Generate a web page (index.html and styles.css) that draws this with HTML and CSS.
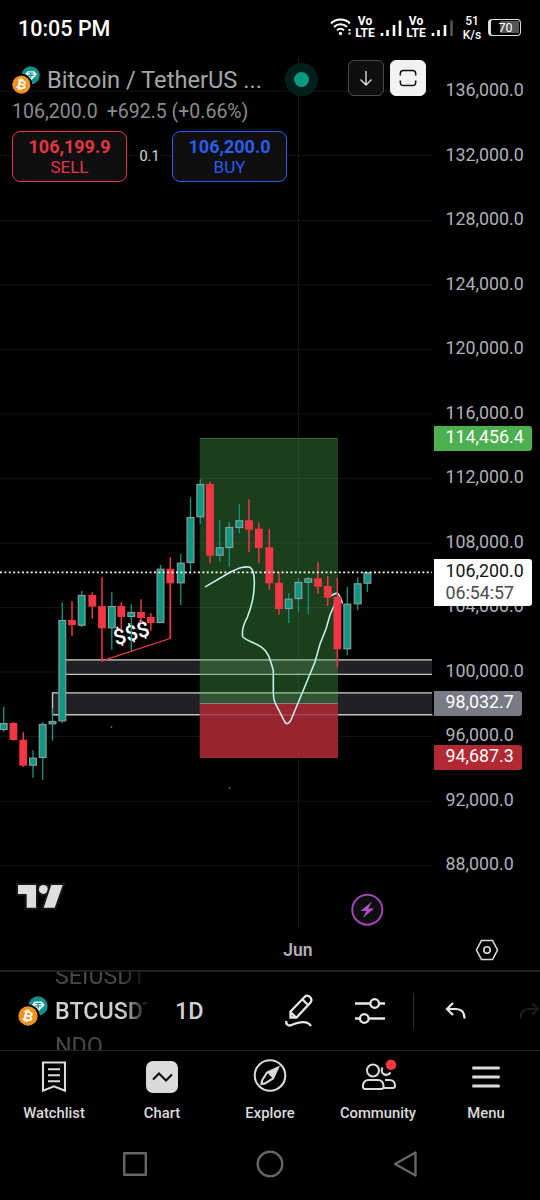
FILE: index.html
```html
<!DOCTYPE html>
<html lang="en">
<head>
    <meta charset="UTF-8">
    <meta name="viewport" content="width=device-width, initial-scale=1.0">
    <title>BTCUSDT Chart</title>
    <link rel="stylesheet" href="styles.css">
</head>
<body>
    <svg class="defs" width="0" height="0">
        <symbol id="coins" viewBox="0 0 30 30">
            <circle cx="20" cy="10" r="9.7" fill="#12918a"/>
            <path d="M16.500 5.500h7.500l2.800 3.500-6 6-7-6z" fill="#e9f6f4"/>
            <path d="M17.500 7.500h5.500M20.200 7.500v5M17 10h6.500" stroke="#12918a" stroke-width="1.200" fill="none"/>
            <circle cx="10" cy="20" r="11.600" fill="#000"/>
            <circle cx="10" cy="20" r="9.700" fill="#f0921f"/>
            <text x="10" y="24.500" class="coin-sign" transform="rotate(13 10 20)">₿</text>
        </symbol>
    </svg>

    <div class="status-bar">
        <span class="clock">10:05 PM</span>
        <div class="status-icons">
            <svg class="wifi" width="23" height="20" viewBox="0 0 23 20">
                <path d="M1 6.500a13.500 13.500 0 0 1 19 0M4 10a9.300 9.300 0 0 1 13 0M7 13.300a5 5 0 0 1 7 0"/>
                <circle cx="10.500" cy="16.500" r="1.700"/>
                <path class="thin" d="M19.500 12v2M19.500 15.500v2"/>
            </svg>
            <span class="volte">Vo<br>LTE</span>
            <svg class="signal" width="22" height="18" viewBox="0 0 22 18">
                <path d="M2 14v3M7.500 11v6M14 6v11M20 1.500v15.500"/>
            </svg>
            <span class="volte">Vo<br>LTE</span>
            <svg class="signal" width="22" height="18" viewBox="0 0 22 18">
                <path d="M2 14v3M7.500 11v6M14 6v11"/>
                <path class="off" d="M20.500 1.500v15.500"/>
            </svg>
            <span class="speed">51<br>K/s</span>
            <span class="battery"><span class="level">70</span></span>
        </div>
    </div>

    <div class="chart">
        <svg class="plot" id="plot" width="433" height="873" viewBox="0 56 433 873">
            <g id="grid"></g>
            <path class="grid-line" d="M298.500 56v873"/>
            <g class="zones">
                <rect x="62" y="660" width="370" height="14"/>
                <rect x="52" y="693" width="380" height="22"/>
                <path class="zone-top" d="M62 659.900h370M52 692.900h380"/>
                <path class="zone-bottom" d="M62 674.400h370M52.500 692.500v22.300h380"/>
            </g>
            <rect class="profit" x="199.700" y="438" width="138.300" height="265.500"/>
            <rect class="loss" x="199.700" y="703.500" width="138.300" height="54.500"/>
            <path class="entry" d="M199.700 703.500h138.300"/>
            <path class="target" d="M199.700 438.500h138.300"/>
            <path class="loss-line" d="M199.700 714.800h138.300"/>
            <g class="brush" transform="translate(190 420) scale(.3333)">
                <path d="M47 500L115 460C150 441 165 438 180 442C190 447 193 460 193 490C193 530 180 572 172 592C160 613 155 630 158 650C165 660 185 664 205 676C235 692 240 715 250 752V820Q250 838 256 850L282 901Q291 922 303 900L375 726L390 672L408 627L420 585L440 540"/>
                <path d="M424 527C437 520 440 518 445 522C450 530 454 538 457 549"/>
            </g>
            <text class="liquidity" x="131.300" y="640.500" transform="rotate(-17 131.3 633)">$$$</text>
            <g id="candles"></g>
            <path class="trend" d="M102 660.800L170.500 638.300V580"/>
            <path class="last-price" d="M0 572.300h432"/>
            <circle class="speck" cx="111.500" cy="727" r=".8"/>
            <circle class="speck" cx="229.500" cy="788" r=".8"/>
            <g class="tv-logo">
                <path d="M18 885H36V907.700H26.700V894H18Z"/>
                <circle cx="43.400" cy="889.400" r="4.500"/>
                <path d="M51.300 885H62.700L54.700 907.700H43.700Z"/>
            </g>
            <g class="flash">
                <circle cx="367.300" cy="909.700" r="15"/>
                <path d="M372 901.500L360.500 911H366.500L362.800 918L374.200 908.500H368.300Z"/>
            </g>
        </svg>

        <div class="price-axis">
            <span>136,000.0</span>
            <span>132,000.0</span>
            <span>128,000.0</span>
            <span>124,000.0</span>
            <span>120,000.0</span>
            <span>116,000.0</span>
            <span>112,000.0</span>
            <span>108,000.0</span>
            <span>104,000.0</span>
            <span>100,000.0</span>
            <span>96,000.0</span>
            <span>92,000.0</span>
            <span>88,000.0</span>
            <div class="tag tag-target">114,456.4</div>
            <div class="tag tag-last">106,200.0<br><small>06:54:57</small></div>
            <div class="tag tag-entry">98,032.7</div>
            <div class="tag tag-stop">94,687.3</div>
        </div>

        <div class="legend">
            <div class="title-row">
                <svg class="coins" width="28" height="28"><use href="#coins"/></svg>
                <span class="name">Bitcoin / TetherUS ...</span>
                <span class="market-dot"></span>
                <button class="icon-btn">
                    <svg width="20" height="20" viewBox="0 0 20 20"><path d="M10 3v14M4.500 11.500L10 17l5.500-5.500"/></svg>
                </button>
                <button class="icon-btn light">
                    <svg width="20" height="20" viewBox="0 0 20 20"><path d="M2.300 7.500V5.800Q2.300 2.500 5.600 2.500h8.800Q17.700 2.500 17.700 5.800V7.500M2.300 12.500v1.700Q2.300 17.500 5.600 17.500h8.800Q17.700 17.500 17.700 14.200V12.500"/></svg>
                </button>
            </div>
            <div class="quote"><span>106,200.0</span><span>+692.5 (+0.66%)</span></div>
            <div class="trade">
                <button class="order sell"><b>106,199.9</b>SELL</button>
                <span class="spread">0.1</span>
                <button class="order buy"><b>106,200.0</b>BUY</button>
            </div>
        </div>
    </div>

    <div class="time-axis">
        <span class="month">Jun</span>
        <svg class="settings" width="24" height="22" viewBox="0 0 24 22">
            <path d="M6.500 1.500h11L22.500 11l-5 9.500h-11L1.500 11z"/>
            <circle cx="12" cy="11" r="3.200"/>
        </svg>
    </div>

    <div class="toolbar">
        <svg class="coins" width="30" height="30"><use href="#coins"/></svg>
        <div class="symbols">
            <span>SEIUSDT</span>
            <span class="current">BTCUSDT</span>
            <span>NDQ</span>
        </div>
        <span class="interval">1D</span>
        <svg class="draw" width="32" height="36" viewBox="0 0 32 36">
            <path d="M6.500 18.500L21 3.500Q23.500 1.500 26 4t.500 5.500L12.500 24.500H6.500zM18.500 6.500l5.500 5.500M6.500 19l5.500 5.500"/>
            <path d="M2.500 28c-1 3 1.500 5.500 5 4 6-2.500 15-5.500 19.500 1"/>
        </svg>
        <svg class="sliders" width="32" height="28" viewBox="0 0 32 28">
            <path d="M1 6.500h15M25 6.500h6M1 21.500h5M15 21.500h16"/>
            <circle cx="20.700" cy="6.500" r="4.300"/>
            <circle cx="10.300" cy="21.500" r="4.300"/>
        </svg>
        <span class="divider"></span>
        <svg class="undo" width="22" height="18" viewBox="0 0 22 18">
            <path d="M8 1L2 7l6 6M2 7h9q8.500 0 8.500 9.500"/>
        </svg>
        <svg class="redo" width="22" height="18" viewBox="0 0 22 18">
            <path d="M14 1l6 6-6 6M20 7h-9Q2.500 7 2.500 16.500"/>
        </svg>
    </div>

    <div class="tabs">
        <div class="tab">
            <svg width="34" height="34" viewBox="0 0 34 34"><path d="M6 2.500h22v28.300l-11-4.500-11 4.500zM11 9.300h12M11 15.300h12M11 21.300h12"/></svg>
            <span>Watchlist</span>
        </div>
        <div class="tab">
            <svg width="34" height="34" viewBox="0 0 34 34"><rect class="solid" x="1" y="1" width="32" height="32" rx="7"/><path class="dark" d="M8 19.500l6-6 7 7 6-6"/></svg>
            <span>Chart</span>
        </div>
        <div class="tab">
            <svg width="34" height="34" viewBox="0 0 34 34"><circle cx="17" cy="15.500" r="15.300"/><path d="M25 7.500l-5 11-8 5-3.500.500.500-3.500 5-8z"/><path class="solid" d="M25 7.500l-11 5 6 6z"/></svg>
            <span>Explore</span>
        </div>
        <div class="tab">
            <svg width="38" height="34" viewBox="0 0 38 34">
                <circle cx="14" cy="10.500" r="6"/>
                <path d="M4 27.500q-.500-7.500 6-7.500h8.500q6.500 0 6 7.500-.500 1.500-2 1.500H6q-1.500 0-2-1.500zM23.500 7.500q-2 4 1 6.500 4 2.500 7-1.500M26 20h4q6.500 0 6 6.500-.500 1.500-2 1.500h-9"/>
                <circle class="badge" cx="32" cy="4.800" r="5.300"/>
            </svg>
            <span>Community</span>
        </div>
        <div class="tab">
            <svg width="34" height="34" viewBox="0 0 34 34"><path class="bars" d="M3.300 8h27.400M3.300 17h27.400M3.300 26h27.400"/></svg>
            <span>Menu</span>
        </div>
    </div>

    <div class="nav">
        <svg width="28" height="28" viewBox="0 0 28 28"><path d="M3.200 3.200h21.600v21.600H3.200z"/></svg>
        <svg width="28" height="28" viewBox="0 0 28 28"><circle cx="14" cy="14" r="12.300"/></svg>
        <svg width="28" height="28" viewBox="0 0 28 28"><path d="M24.500 2.500v23L4 14z"/></svg>
    </div>

    <script src="chart.js"></script>
</body>
</html>
```

FILE: styles.css
```css
* {
    box-sizing: border-box;
}

body {
    margin: 0;
    width: 540px;
    height: 1200px;
    overflow: hidden;
    background: #000;
    color: #dbdbdb;
    font-family: Roboto, "Liberation Sans", sans-serif;
}

svg {
    fill: none;
    display: block;
    flex: none;
}

.defs {
    position: absolute;
}

button {
    font-family: inherit;
    padding: 0;
}

/* Status bar */
.status-bar {
    height: 56px;
    padding: 0 19px 0 18px;
    display: flex;
    align-items: center;
    justify-content: space-between;
}

.clock {
    font-size: 21.5px;
    font-weight: 500;
    color: #fff;
}

.status-icons {
    display: flex;
    align-items: center;
    color: #fff;
}

.wifi {
    stroke: #fff;
    stroke-width: 2;
    margin: -2px 2px 0 0;
}

.wifi circle {
    fill: #fff;
    stroke: none;
}

.volte {
    width: 20px;
    margin-top: -3px;
    font-size: 12px;
    line-height: 12px;
    font-weight: 700;
    text-align: center;
}

.signal {
    stroke: #fff;
    stroke-width: 2.6;
    margin: 0 4px 0 5px;
}

.signal .off {
    stroke: #555;
}

.speed {
    width: 20px;
    margin: 0 6px 0 5px;
    font-size: 12px;
    line-height: 14px;
    font-weight: 500;
    text-align: center;
}

.battery {
    width: 33px;
    height: 17px;
    margin-top: -2px;
    padding: 1px;
    border: 1.5px solid #ddd;
    border-left-width: 3px;
    border-radius: 4px;
}

.level {
    display: block;
    height: 12px;
    line-height: 13px;
    font-size: 12.5px;
    text-align: center;
    background: linear-gradient(90deg, #000 30%, #555 30%);
}

/* Chart */
.chart {
    position: relative;
    display: flex;
    height: 873px;
}

.grid-line {
    stroke: #151515;
}

.zones rect {
    fill: #212125;
}

.zone-top {
    stroke: #9d9d9f;
    stroke-width: 1.8;
}

.zone-bottom {
    stroke: #c4c4c4;
    stroke-width: 1.4;
}

.profit {
    fill: #4caf50;
    fill-opacity: .36;
}

.loss {
    fill: #a02632;
    fill-opacity: .94;
}

.entry {
    stroke: #80837e;
}

.target {
    stroke: #2f6330;
}

.loss-line {
    stroke: #b34a55;
}

.brush {
    stroke: #c3f0e9;
    stroke-width: 4.8;
    stroke-linecap: round;
}

.liquidity {
    fill: #fff;
    font-size: 21.5px;
    font-weight: 500;
    text-anchor: middle;
}

.up {
    fill: #0b9981;
    stroke: #8f9a9b;
    stroke-width: 1.2;
}

.down {
    fill: #f23645;
}

.wick-up {
    stroke: #0b9981;
    stroke-width: 1.3;
}

.wick-down {
    stroke: #f23645;
    stroke-width: 1.5;
}

.trend {
    stroke: #e13a4a;
    stroke-width: 1.4;
}

.last-price {
    stroke: #fff;
    stroke-width: 1.7;
    stroke-dasharray: 1.9 2.5;
}

.speck {
    fill: #999;
}

.tv-logo {
    fill: #dedede;
    stroke: #171717;
    stroke-width: 4;
    paint-order: stroke;
}

.flash circle {
    fill: #0d0d0d;
    stroke: #a245b4;
    stroke-width: 2;
}

.flash path {
    fill: #b04fc2;
}

.coin-sign {
    fill: #fff;
    font-size: 13.5px;
    font-weight: 700;
    text-anchor: middle;
}

.price-axis {
    position: relative;
    flex: 1;
    padding: 2px 0 0 12.5px;
    display: flex;
    flex-direction: column;
    color: #b0b1b6;
    font-size: 17.8px;
}

.price-axis > span {
    height: 64.54px;
    line-height: 64.54px;
}

.tag {
    position: absolute;
    left: .5px;
    height: 25px;
    padding: 0 8px 0 12px;
    line-height: 22px;
    border-radius: 0 3px 3px 0;
    color: #fff;
}

.tag-target {
    top: 370px;
    background: #4caf50;
}

.tag-last {
    top: 503px;
    height: 47px;
    line-height: 22px;
    padding-top: 1px;
    background: #fff;
    color: #131313;
}

.tag-last small {
    font-size: inherit;
    color: #4a4a4a;
}

.tag-entry {
    top: 635px;
    background: #787b86;
}

.tag-stop {
    top: 689px;
    background: #b22833;
}

/* Symbol info over the chart */
.legend {
    position: absolute;
    left: 12px;
    top: 4px;
    width: 414px;
}

.title-row {
    display: flex;
    align-items: center;
    height: 36px;
}

.title-row .coins {
    margin-top: 3px;
}

.name {
    width: 226px;
    margin: 3px 0 0 7px;
    font-size: 23.7px;
    color: #a6a6a6;
    white-space: nowrap;
}

.market-dot {
    width: 33px;
    height: 33px;
    margin: 3px 30px 0 12px;
    border: 9px solid #02201b;
    border-radius: 50%;
    background: #089981;
}

.icon-btn {
    width: 36px;
    height: 36px;
    flex: none;
    display: flex;
    align-items: center;
    justify-content: center;
    background: #0f0f0f;
    border: 1px solid #4a4a4a;
    border-radius: 6px;
    stroke: #dbdbdb;
    stroke-width: 1.4;
}

.icon-btn.light {
    margin-left: 6px;
    background: #f2f2f2;
    border-color: #f2f2f2;
    stroke: #111;
    stroke-width: 1.5;
}

.quote {
    display: flex;
    gap: 9px;
    height: 35px;
    line-height: 31px;
    font-size: 19.5px;
    color: #8c8c8c;
}

.trade {
    display: flex;
    align-items: center;
}

.order {
    width: 115px;
    height: 51px;
    border: 1.5px solid;
    border-radius: 8px;
    background: #0f0f0f;
    font-size: 17px;
    line-height: 20px;
}

.order b {
    display: block;
    font-size: 18px;
}

.sell {
    color: #e23644;
}

.buy {
    color: #2a5cee;
}

.spread {
    width: 45px;
    font-size: 14.5px;
    text-align: center;
}

/* Time axis */
.time-axis {
    height: 43px;
    display: flex;
    align-items: center;
    border-bottom: 2px solid #202020;
}

.month {
    width: 298px;
    margin-left: 149px;
    font-size: 17.5px;
    font-weight: 600;
    text-align: center;
    color: #b0b1b6;
}

.settings {
    margin-left: 28px;
    stroke: #dbdbdb;
    stroke-width: 1.6;
}

/* Toolbar */
.toolbar {
    height: 79px;
    padding-left: 18px;
    display: flex;
    align-items: center;
    overflow: hidden;
    border-bottom: 1px solid #262626;
    stroke: #e8e8e8;
    stroke-width: 2;
}

.coins {
    stroke: none;
}

.symbols {
    width: 96px;
    margin-left: 7px;
    display: flex;
    flex-direction: column;
    overflow: hidden;
    font-size: 23.3px;
    line-height: 35px;
    color: #484848;
    -webkit-mask-image: linear-gradient(90deg, #000 70%, transparent 98%);
    mask-image: linear-gradient(90deg, #000 70%, transparent 98%);
}

.symbols .current {
    font-weight: 500;
    color: #cfcfcf;
}

.interval {
    width: 60px;
    margin-left: 24px;
    font-size: 23.5px;
    font-weight: 500;
    color: #cfcfcf;
}

.draw {
    margin-left: 49px;
    stroke-width: 2.3;
}

.sliders {
    margin-left: 38px;
    stroke-width: 2.3;
}

.divider {
    width: 1px;
    height: 36px;
    margin: 0 31px 0 27px;
    background: #2c2c2c;
}

.undo {
    stroke-width: 2.2;
}

.redo {
    margin-left: 51px;
    stroke: #1c1c1c;
}

/* Tabs */
.tabs {
    height: 77px;
    padding-top: 9px;
    display: flex;
    stroke: #dbdbdb;
    stroke-width: 2.1;
}

.tab {
    width: 108px;
    display: flex;
    flex-direction: column;
    align-items: center;
    gap: 10px;
    font-size: 14.8px;
    font-weight: 500;
}

.tab svg {
    overflow: visible;
}

.solid {
    fill: #dbdbdb;
    stroke: none;
}

.dark {
    stroke: #0f0f0f;
}

.bars {
    stroke-width: 2.8;
}

.badge {
    fill: #f23645;
    stroke: none;
}

/* Android navigation */
.nav {
    height: 72px;
    padding: 0 121px;
    display: flex;
    align-items: center;
    justify-content: space-between;
    stroke: #666;
    stroke-width: 2.4;
    stroke-linejoin: round;
}
```

FILE: chart.js
```javascript
const svgNs = "http://www.w3.org/2000/svg";
const grid = document.getElementById("grid");
const candleLayer = document.getElementById("candles");

// x, body top, body bottom, high, low, direction
const candles = [
    [3.7, 723, 730, 706.7, 731.7, "up"],
    [13.4, 723, 740, 722, 740.7, "down"],
    [23.2, 739.7, 765.7, 732.3, 767, "down"],
    [33, 757.7, 765.7, 750.3, 777.7, "up"],
    [42.7, 724, 758, 722, 780, "up"],
    [52.5, 721, 724.3, 708.3, 740.7, "up"],
    [62.3, 620, 721.3, 602.3, 723, "up"],
    [72, 620, 625.3, 601.3, 636, "down"],
    [81.7, 595, 625.7, 591, 627, "up"],
    [92.3, 595, 606.7, 592.3, 618.7, "down"],
    [102, 606, 628.3, 577.3, 661.7, "down"],
    [111.8, 606, 628.3, 592.3, 649.7, "up"],
    [121.3, 606, 617, 602.3, 630, "down"],
    [131.3, 612, 617, 604.3, 651.7, "up"],
    [141, 612, 618, 599.3, 623.3, "down"],
    [150.8, 617, 623, 613, 630.7, "down"],
    [160.5, 568.7, 623, 565, 623, "up"],
    [170.3, 568.7, 583.3, 557.3, 638.3, "down"],
    [180.8, 562.7, 583.3, 554, 605, "up"],
    [190.5, 517, 563, 497.3, 574.3, "up"],
    [200.3, 484, 517.3, 479.3, 524, "up"],
    [210, 484, 555.7, 482, 563.3, "down"],
    [219.7, 547.3, 555.7, 520, 561.7, "up"],
    [229.3, 527, 548, 522, 566.7, "up"],
    [239.3, 520.3, 528, 504, 533.3, "up"],
    [249, 520.3, 529.7, 499.3, 552, "down"],
    [258.8, 528.7, 548, 522.7, 563.3, "down"],
    [269.3, 547.3, 583.3, 528.7, 590, "down"],
    [279, 582.7, 609, 572.3, 614.7, "down"],
    [288.7, 598.7, 609, 593.3, 623, "up"],
    [298.4, 582, 599, 578, 611.7, "up"],
    [308.3, 578.3, 582.7, 577, 614, "up"],
    [318, 578.3, 586.7, 562.3, 594, "down"],
    [327.7, 586, 597.7, 576, 606, "down"],
    [337.4, 596.7, 649.3, 578, 667, "down"],
    [347.3, 603.7, 649.3, 586.7, 655.3, "up"],
    [357.7, 583.3, 604.3, 577.3, 610.3, "up"],
    [367.4, 572.3, 583.7, 572.3, 592, "up"]
];

function add(parent, tag, attrs) {
    const el = document.createElementNS(svgNs, tag);
    for (const key in attrs) el.setAttribute(key, attrs[key]);
    parent.appendChild(el);
}

for (let i = 0; i < 13; i++) {
    const y = 91.2 + i * 64.54;
    add(grid, "path", { class: "grid-line", d: `M0 ${y}h432` });
}

candles.forEach(([x, top, bottom, high, low, dir]) => {
    add(candleLayer, "path", { class: "wick-" + dir, d: `M${x} ${high}V${low}` });
    // rising bodies have a grey outline that sits inside the body width
    const inset = dir === "up" ? 0.5 : 0;
    add(candleLayer, "rect", {
        class: dir,
        x: x - 3.9 + inset,
        y: top + inset,
        width: 7.8 - inset * 2,
        height: bottom - top - inset * 2
    });
});
```
